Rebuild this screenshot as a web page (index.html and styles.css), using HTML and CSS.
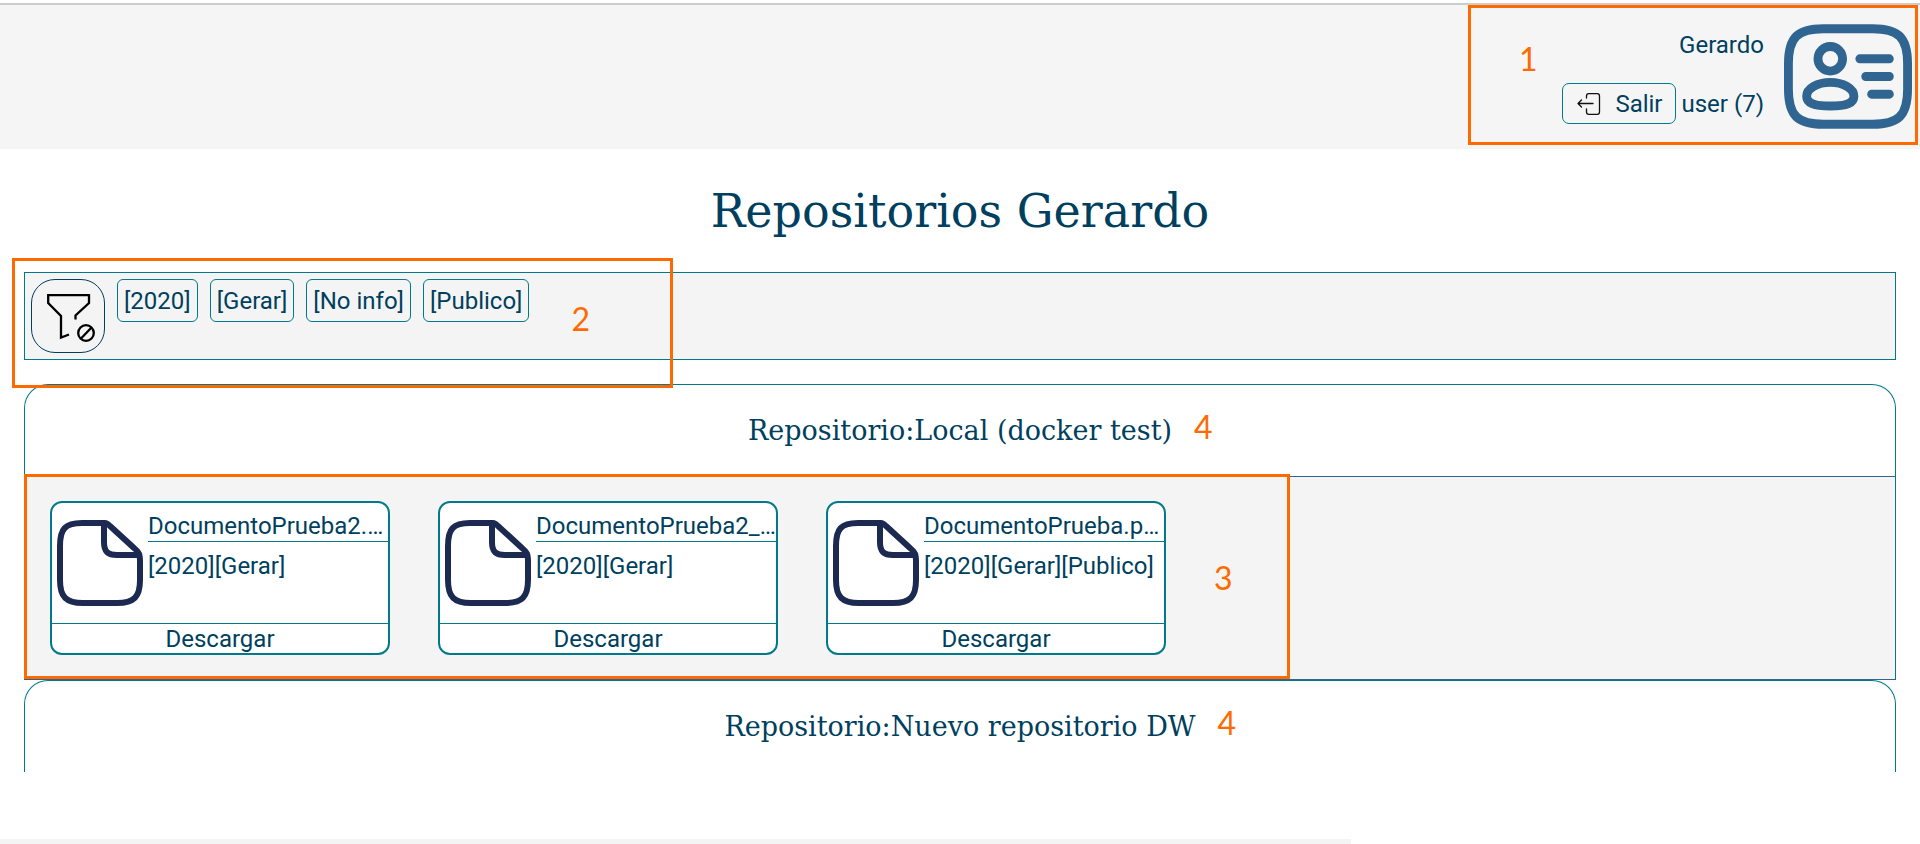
FILE: index.html
```html
<!DOCTYPE html>
<html lang="es">
<head>
<meta charset="utf-8">
<title>Repositorios Gerardo</title>
<link rel="stylesheet" href="styles.css">
</head>
<body>
<svg class="sprite" aria-hidden="true">
  <symbol id="doc" viewBox="0 0 86 86">
    <g fill="none" stroke="#1c2951" stroke-width="6" stroke-linejoin="round">
      <path d="M48 3H25C8 3 3 9 3 26v34c0 17 6 23 23 23h34c17 0 23-6 23-23V42c0-8-1-10-6-14L53 6c-2-2-3-3-5-3z"/>
      <path d="M47 4v18c0 10 4 13 13 13h22"/>
    </g>
  </symbol>
</svg>
<header class="topbar">
  <div class="account callout">
    <span class="mark">1</span>
    <div class="account-info">
      <span class="line">Gerardo</span>
      <span class="line"><button class="logout" type="button"><svg width="24" height="24" viewBox="0 0 24 24" fill="none" stroke="#111" stroke-width="1.3" stroke-linecap="round" stroke-linejoin="round"><path d="M9.500 6V4c0-1.700.6-2.300 2.300-2.300h8.400c1.700 0 2.300.6 2.300 2.300v16c0 1.700-.6 2.300-2.300 2.300h-8.400c-1.700 0-2.300-.6-2.300-2.300v-3M16 11.500H1M4.500 8 1 11.500 4.500 15"/></svg>Salir</button> user (7)</span>
    </div>
    <svg class="idcard" viewBox="0 0 130 106" fill="none" stroke="#306592" stroke-width="9" stroke-linecap="round">
      <path d="M40 4.500H90C116 4.500 125.500 13 125.500 40V66C125.500 93 116 101.500 90 101.500H40C14 101.500 4.500 93 4.500 66V40C4.500 13 14 4.500 40 4.500Z"/>
      <circle cx="47" cy="35" r="12.500"/>
      <path d="M47 59c-13 0-24 6-24 14 0 7 7 10 24 10s24-3 24-10c0-8-11-14-24-14zM77 35h30M83 53h24M89 71h18"/>
    </svg>
  </div>
</header>
<main class="page">
  <h1 class="title">Repositorios Gerardo</h1>
  <section class="filters" aria-label="Filtros">
    <button class="clear" type="button" aria-label="Quitar filtros"><svg width="48" height="48" viewBox="0 0 48 48" fill="none" stroke="#000" stroke-width="2.300"><path d="M28.500 25.500V21.500L42 9V1.200H1.200V9L14 22V43.500L22 40.500"/><circle cx="39" cy="39" r="7.800"/><path d="M34 44.500 44.500 33.500"/></svg></button>
    <button class="tag" type="button">[2020]</button>
    <button class="tag" type="button">[Gerar]</button>
    <button class="tag" type="button">[No info]</button>
    <button class="tag" type="button">[Publico]</button>
    <span class="mark mark-filters">2</span>
    <span class="frame frame-filters"></span>
  </section>
  <section class="repo">
    <h2 class="repo-head"><span class="repo-name">Repositorio:Local (docker test)<span class="mark mark-head">4</span></span></h2>
    <div class="repo-body">
      <article class="card">
        <div class="card-main"><svg class="doc"><use href="#doc"/></svg><div class="card-text"><h3 class="name">DocumentoPrueba2.pdf</h3><p class="labels">[2020][Gerar]</p></div></div>
        <button class="download" type="button">Descargar</button>
      </article>
      <article class="card">
        <div class="card-main"><svg class="doc"><use href="#doc"/></svg><div class="card-text"><h3 class="name">DocumentoPrueba2_2.pdf</h3><p class="labels">[2020][Gerar]</p></div></div>
        <button class="download" type="button">Descargar</button>
      </article>
      <article class="card">
        <div class="card-main"><svg class="doc"><use href="#doc"/></svg><div class="card-text"><h3 class="name">DocumentoPrueba.pdf</h3><p class="labels">[2020][Gerar][Publico]</p></div></div>
        <button class="download" type="button">Descargar</button>
      </article>
      <span class="mark">3</span>
      <span class="frame frame-docs"></span>
    </div>
  </section>
  <section class="repo">
    <h2 class="repo-head"><span class="repo-name">Repositorio:Nuevo repositorio DW<span class="mark mark-head">4</span></span></h2>
  </section>
</main>
<footer class="footer"></footer>
</body>
</html>
```
FILE: styles.css
```css
* { box-sizing: border-box; }
body {
  margin: 0;
  min-height: 100vh;
  display: flex;
  flex-direction: column;
  background: #fff;
  color: #003f5e;
  font: 24px/32px Roboto, sans-serif;
}
h1, h2, h3, p { margin: 0; font-weight: 400; }
button { font: inherit; color: inherit; background: none; padding: 0; cursor: pointer; }
svg { flex: none; }
.sprite { position: absolute; width: 0; height: 0; }

.topbar {
  display: flex;
  justify-content: flex-end;
  margin-top: 3px;
  padding: 0 2px 4px 0;
  border-top: 2px solid #ccc;
  background: #f5f5f5;
}
.callout { border: 3px solid #ff6a00; }
.account {
  display: flex;
  justify-content: space-between;
  width: 450px;
  height: 140px;
  padding: 16px 3px 0 48px;
}
.account .mark { padding-top: 15px; }
.account-info {
  display: flex;
  flex-direction: column;
  align-items: flex-end;
  gap: 22px;
  margin-left: auto;
  padding-right: 20px;
}
.line { display: flex; align-items: center; gap: 6px; }
.line:first-child { padding-top: 5px; }
.logout {
  display: flex;
  align-items: center;
  gap: 14px;
  height: 41px;
  padding: 0 12px 0 14px;
  border: 1px solid #007a8a;
  border-radius: 7px;
}
.idcard { width: 128px; height: 105px; }

.mark { color: #ff6a00; font: 32px/40px Lato, sans-serif; }
.frame { position: absolute; border: 3px solid #ff6a00; pointer-events: none; }

.page { padding: 0 24px; }
.title {
  padding: 30px 0 29px;
  text-align: center;
  font: 46px/64px "DejaVu Serif", serif;
}
.filters {
  position: relative;
  display: flex;
  align-items: flex-start;
  gap: 12px;
  padding: 6px;
  border: 1px solid #007a8a;
  background: #f4f4f4;
}
.clear {
  display: grid;
  place-items: center;
  width: 74px;
  height: 74px;
  padding: 4px 0 0 5px;
  border: 1px solid #003f5e;
  border-radius: 24px;
}
.tag { height: 43px; padding: 0 6px; border: 1px solid #007a8a; border-radius: 6px; }
.mark-filters { padding: 20px 0 0 30px; }
.frame-filters { left: -13px; top: -15px; width: 661px; height: 130px; }

.repo-head {
  padding: 30px 0 29px;
  border: solid #007a8a;
  border-width: 1px 1px 0;
  border-radius: 24px 24px 0 0;
  text-align: center;
  font: 27px/32px "DejaVu Serif", serif;
}
.filters + .repo { margin-top: 24px; }
.repo-name { position: relative; }
.mark-head { position: absolute; left: 100%; top: -8px; margin-left: 22px; }
.repo-body {
  position: relative;
  display: flex;
  align-items: center;
  gap: 48px;
  padding: 24px 25px;
  border: 1px solid #007a8a;
  border-top-color: #306592;
  border-bottom-color: #306592;
  background: #f4f4f4;
}
.frame-docs { left: -1px; top: -3px; width: 1266px; height: 205px; }

.card {
  width: 340px;
  border: 2px solid #007a8a;
  border-radius: 12px;
  background: #fff;
  overflow: hidden;
}
.card-main { display: flex; gap: 5px; height: 120px; padding: 9px 0 0 5px; }
.doc { width: 86px; height: 86px; margin-top: 8px; }
.card-text { flex: 1; min-width: 0; }
.name {
  overflow: hidden;
  white-space: nowrap;
  text-overflow: ellipsis;
  font-size: 24px;
  line-height: 29px;
  border-bottom: 1px solid #007a8a;
}
.labels { padding-top: 8px; }
.download {
  display: block;
  width: 100%;
  height: 30px;
  line-height: 28px;
  border: 0;
  border-top: 1px solid #007a8a;
}
.footer { width: 1351px; max-width: 100%; height: 5px; margin-top: auto; background: #f4f4f4; }
```
